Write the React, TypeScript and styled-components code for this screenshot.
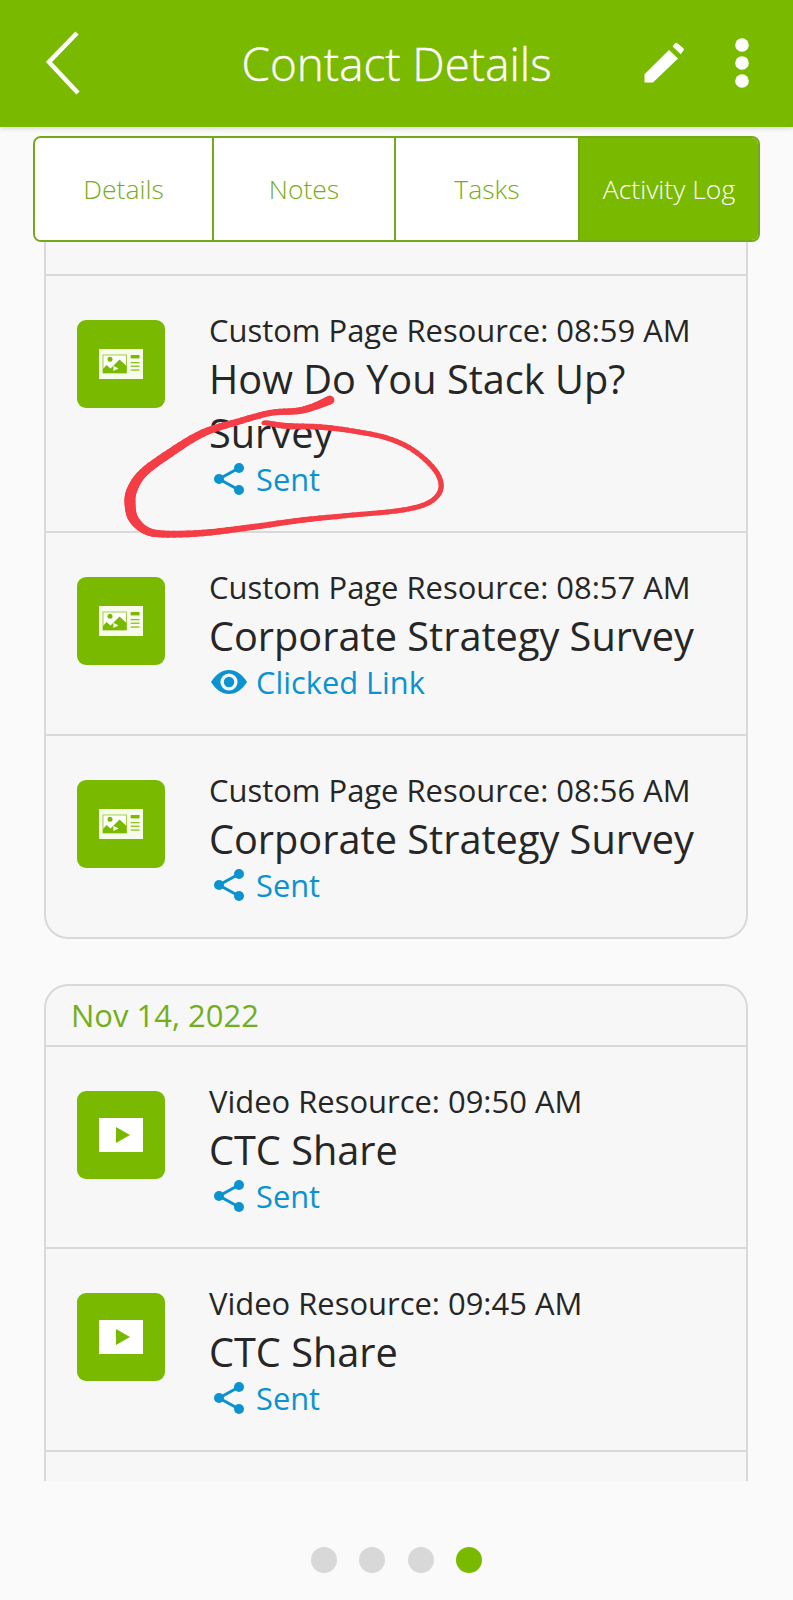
import React from "react";
import styled, { createGlobalStyle } from "styled-components";

const Global = createGlobalStyle`
  html, body { margin: 0; padding: 0; background: #fafafa; }
  * { box-sizing: border-box; }
  body { font-family: "Open Sans", "Liberation Sans", sans-serif; }
`;

const Page = styled.div`
  position: relative;
  width: 793px;
  height: 1600px;
  overflow: hidden;
  background: #fafafa;
  display: flex;
  flex-direction: column;
`;

const Header = styled.header`
  height: 127px;
  flex: none;
  background: #79b900;
  box-shadow: 0 1px 5px rgba(0, 0, 0, 0.18);
  display: grid;
  grid-template-columns: 1fr auto 1fr;
  align-items: center;
  padding-bottom: 2px;
  color: #fff;
`;

const BackSlot = styled.div`
  padding-left: 46px;
`;

const Title = styled.h1`
  margin: 0;
  font-size: 45.8px;
  font-weight: 300;
  line-height: 60px;
  -webkit-text-stroke: 0.4px #fff;
`;

const HeaderActions = styled.div`
  display: flex;
  justify-content: flex-end;
  align-items: center;
  gap: 50px;
  padding-right: 44px;
`;

const Tabs = styled.nav`
  flex: none;
  margin: 9px 33px 0 33px;
  height: 106px;
  display: grid;
  grid-template-columns: 179px 182px 184px 1fr;
  border: 2px solid #73a81a;
  border-radius: 8px;
  overflow: hidden;
  background: #fff;
`;

const Tab = styled.div<{ $active?: boolean; $last?: boolean }>`
  display: flex;
  align-items: center;
  justify-content: center;
  font-size: 26.5px;
  font-weight: 300;
  color: ${(p) => (p.$active ? "#fff" : "#79ab22")};
  background: ${(p) => (p.$active ? "#79b900" : "#fff")};
  border-right: ${(p) => (p.$last ? "none" : "2px solid #73a81a")};
`;

const Scroller = styled.main`
  flex: none;
  height: 1239px;
  margin: 0 45px 0 44px;
  overflow: hidden;
  display: flex;
  flex-direction: column;
  gap: 45px;
`;

const Card = styled.section<{ $cutTop?: boolean; $cutBottom?: boolean }>`
  flex: none;
  background: #f7f7f7;
  border: 2px solid #d9d9d9;
  border-top-width: ${(p) => (p.$cutTop ? 0 : 2)}px;
  border-bottom-width: ${(p) => (p.$cutBottom ? 0 : 2)}px;
  border-radius: ${(p) => (p.$cutTop ? "0 0 24px 24px" : "24px 24px 0 0")};
`;

const CutEdge = styled.div`
  height: 32px;
`;

const DateHead = styled.div`
  height: 59px;
  padding-left: 25px;
  font-size: 31px;
  line-height: 59px;
  color: #74ae1b;
`;

const Row = styled.article<{ $h: number }>`
  height: ${(p) => p.$h}px;
  border-top: 2px solid #d9d9d9;
  padding: 44px 0 0 31px;
  display: flex;
  align-items: flex-start;
  gap: 44px;
`;

const Tile = styled.div`
  flex: none;
  width: 88px;
  height: 88px;
  border-radius: 9px;
  background: #79b900;
  display: flex;
  align-items: center;
  justify-content: center;
`;

const Body = styled.div`
  flex: 1;
  margin-top: -10px;
  min-width: 0;
  padding-right: 40px;
`;

const Kind = styled.div`
  font-size: 30.95px;
  line-height: 41px;
  color: #262626;
  white-space: nowrap;
`;

const Name = styled.div`
  font-size: 39.7px;
  line-height: 54px;
  color: #262626;
  margin-top: 1px;
`;

const Status = styled.div`
  display: flex;
  align-items: center;
  gap: 9px;
  height: 40px;
  margin-top: -1px;
  padding-left: 2px;
  font-size: 30.8px;
  color: #0a93cf;
`;

const StatusIcon = styled.span`
  flex: none;
  width: 36px;
  display: flex;
  justify-content: center;
`;

const Dots = styled.div`
  flex: none;
  display: flex;
  justify-content: center;
  gap: 22.5px;
  margin-top: 66px;
`;

const Dot = styled.span<{ $on?: boolean }>`
  width: 26px;
  height: 26px;
  border-radius: 50%;
  background: ${(p) => (p.$on ? "#79b900" : "#d8d8d8")};
`;

const Scribble = styled.svg`
  position: absolute;
  left: 0;
  top: 0;
  pointer-events: none;
`;

const BackIcon = () => (
  <svg width="34" height="64" viewBox="0 0 34 64" style={{ display: "block" }}>
    <path d="M31 2 L3 31 L32 62" fill="none" stroke="#fff" strokeWidth="4.5" />
  </svg>
);

const Pencil = () => (
  <svg width="41" height="41" viewBox="0 0 41 41" fill="#fff">
    <path d="M0.5 40.5 V32.3 L25 8 L34 16.5 L9 40.5 Z" />
    <path d="M28.6 4.4 L31 1.2 Q32 0.3 33 1.1 L39.4 6.3 Q40.4 7.2 39.6 8.2 L36.8 12.3 Z" />
  </svg>
);

const Kebab = () => (
  <svg width="14" height="50" viewBox="0 0 14 50" fill="#fff">
    <circle cx="7" cy="7" r="6.8" />
    <circle cx="7" cy="25" r="6.8" />
    <circle cx="7" cy="43" r="6.8" />
  </svg>
);

const Share = () => (
  <svg width="30" height="32" viewBox="0 0 30 32">
    <path d="M25 5 L5 16 L25 27" fill="none" stroke="#0a93cf" strokeWidth="3" />
    <circle cx="25" cy="5" r="5" fill="#0a93cf" />
    <circle cx="5" cy="16" r="5" fill="#0a93cf" />
    <circle cx="25" cy="27" r="5" fill="#0a93cf" />
  </svg>
);

const Eye = () => (
  <svg width="36" height="24" viewBox="0 0 36 24">
    <path d="M0 12 C5 4 11 0 18 0 S31 4 36 12 C31 20 25 24 18 24 S5 20 0 12 Z" fill="#0a93cf" />
    <circle cx="18" cy="12" r="8.6" fill="#f7f7f7" />
    <circle cx="18" cy="12" r="5.2" fill="#0a93cf" />
  </svg>
);

const PageGlyph = () => (
  <svg width="44" height="30" viewBox="0 0 44 30">
    <rect width="44" height="30" fill="#f7fbe9" />
    <rect x="4" y="6" width="23.5" height="18" fill="#fff" stroke="#8cc320" strokeWidth="0.8" />
    <circle cx="11" cy="10.3" r="2.5" fill="#79b900" />
    <path d="M4 24 V20 L7.5 16 L11.5 19.5 L20.5 10.5 L27.5 17 V24 Z" fill="#79b900" />
    <path d="M14.3 16.8 L19.6 19.4 L14.3 22 Z" fill="#f7fbe9" />
    <rect x="31.7" y="6" width="8.8" height="3.4" fill="#79b900" />
    <rect x="31.7" y="13" width="8.8" height="1.3" fill="#8cc320" />
    <rect x="31.7" y="16.6" width="8.8" height="1.3" fill="#8cc320" />
    <rect x="31.7" y="20.4" width="8.8" height="1.3" fill="#8cc320" />
  </svg>
);

const VideoGlyph = () => (
  <svg width="44" height="34" viewBox="0 0 44 34">
    <rect width="44" height="34" fill="#fff" />
    <path d="M17 9 L31 17 L17 25 Z" fill="#79b900" />
  </svg>
);

/* The hand-drawn ring: centre line [x, y] with a pen width at each point, in page pixels. */
const ink: [number, number, number][] = [
  [330, 400, 9], [313, 407, 7], [297, 411, 6.5], [270, 413, 6], [237, 422, 6.5], [203, 433, 7.5],
  [170, 453, 8.5], [143, 473, 9], [132, 490, 10.5], [130, 503, 11], [133, 518, 10], [145, 530, 8],
  [163, 534, 7], [203, 533, 6.5], [253, 527, 6], [303, 520, 5.5], [353, 515, 5], [403, 510, 5],
  [430, 502, 5], [441, 488, 5], [435, 470, 5], [413, 450, 5], [387, 438, 5],
  [353, 431, 5], [320, 427, 5.5], [287, 426, 6], [267, 423, 5], [263, 423, 2.5],
];

const inkStrokes = () => {
  const out: { x1: number; y1: number; x2: number; y2: number; w: number }[] = [];
  const at = (i: number) => ink[Math.max(0, Math.min(ink.length - 1, i))];
  const STEPS = 6;
  const point = (i: number, t: number) => {
    const [p0, p1, p2, p3] = [at(i - 1), at(i), at(i + 1), at(i + 2)];
    const c = (k: number) =>
      0.5 *
      (2 * p1[k] +
        (p2[k] - p0[k]) * t +
        (2 * p0[k] - 5 * p1[k] + 4 * p2[k] - p3[k]) * t * t +
        (3 * p1[k] - p0[k] - 3 * p2[k] + p3[k]) * t * t * t);
    return { x: c(0), y: c(1), w: p1[2] + (p2[2] - p1[2]) * t };
  };
  for (let i = 0; i < ink.length - 1; i++) {
    for (let s = 0; s < STEPS; s++) {
      const a = point(i, s / STEPS);
      const b = point(i, (s + 1) / STEPS);
      out.push({ x1: a.x, y1: a.y, x2: b.x, y2: b.y, w: (a.w + b.w) / 2 });
    }
  }
  return out;
};

type Item = {
  h: number;
  kind: string;
  name: string;
  status: "Sent" | "Clicked Link";
  video?: boolean;
};

const first: Item[] = [
  { h: 257, kind: "Custom Page Resource: 08:59 AM", name: "How Do You Stack Up? Survey", status: "Sent" },
  { h: 203, kind: "Custom Page Resource: 08:57 AM", name: "Corporate Strategy Survey", status: "Clicked Link" },
  { h: 203, kind: "Custom Page Resource: 08:56 AM", name: "Corporate Strategy Survey", status: "Sent" },
];

const second: Item[] = [
  { h: 202, kind: "Video Resource: 09:50 AM", name: "CTC Share", status: "Sent", video: true },
  { h: 203, kind: "Video Resource: 09:45 AM", name: "CTC Share", status: "Sent", video: true },
];

const ActivityRow = ({ item }: { item: Item }) => (
  <Row $h={item.h}>
    <Tile>{item.video ? <VideoGlyph /> : <PageGlyph />}</Tile>
    <Body>
      <Kind>{item.kind}</Kind>
      <Name>{item.name}</Name>
      <Status>
        <StatusIcon>{item.status === "Sent" ? <Share /> : <Eye />}</StatusIcon>
        {item.status}
      </Status>
    </Body>
  </Row>
);

export default function App() {
  return (
    <Page>
      <Global />
      <Header>
        <BackSlot>
          <BackIcon />
        </BackSlot>
        <Title>Contact Details</Title>
        <HeaderActions>
          <Pencil />
          <Kebab />
        </HeaderActions>
      </Header>
      <Tabs>
        <Tab>Details</Tab>
        <Tab>Notes</Tab>
        <Tab>Tasks</Tab>
        <Tab $active $last>Activity Log</Tab>
      </Tabs>
      <Scroller>
        <Card $cutTop>
          <CutEdge />
          {first.map((item) => (
            <ActivityRow key={item.kind} item={item} />
          ))}
        </Card>
        <Card $cutBottom>
          <DateHead>Nov 14, 2022</DateHead>
          {second.map((item) => (
            <ActivityRow key={item.kind} item={item} />
          ))}
          <Row $h={60} />
        </Card>
      </Scroller>
      <Dots>
        <Dot />
        <Dot />
        <Dot />
        <Dot $on />
      </Dots>
      <Scribble width="793" height="1600" viewBox="0 0 793 1600">
        {inkStrokes().map((s, i) => (
          <line key={i} x1={s.x1} y1={s.y1} x2={s.x2} y2={s.y2} stroke="#f43d45" strokeWidth={s.w} strokeLinecap="round" />
        ))}
      </Scribble>
    </Page>
  );
}
